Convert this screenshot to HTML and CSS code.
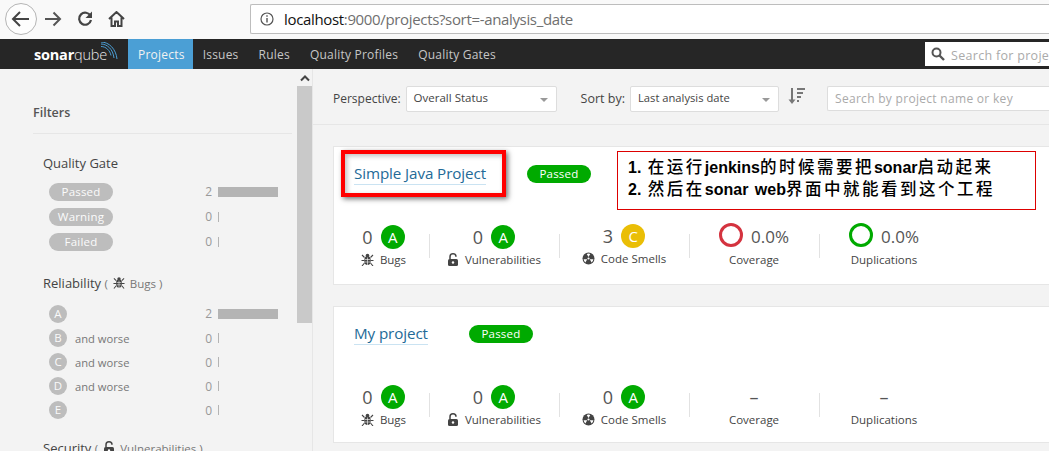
FILE: index.html
```html
<!DOCTYPE html>
<html lang="en">
<head>
<meta charset="utf-8">
<title>SonarQube projects</title>
<link rel="stylesheet" href="styles.css">
</head>
<body>
<header class="chrome">
  <div class="nav-btns">
    <span class="back"><svg width="24" height="24" viewBox="0 0 24 24"><path d="M20 12H5M11 5l-7 7 7 7" fill="none" stroke="#444" stroke-width="2"/></svg></span>
    <svg class="fwd" width="18" height="18" viewBox="0 0 18 18"><path d="M1 9h15M9.500 2.500L16 9l-6.500 6.500" fill="none" stroke="#555" stroke-width="2"/></svg>
    <svg class="rel" width="16" height="16" viewBox="0 0 16 16"><path d="M13.500 5A6 6 0 1 0 14 9" fill="none" stroke="#444" stroke-width="2.200"/><path d="M15 0.500v6.500h-6.500z" fill="#444"/></svg>
    <svg class="home" width="17" height="16" viewBox="0 0 17 16"><path d="M1 8l7.500-7 7.500 7M3.500 6.500V15h3.500v-4.500h3V15h3.500V6.500" fill="none" stroke="#444" stroke-width="2"/></svg>
  </div>
  <div class="address">
    <svg width="14" height="14" viewBox="0 0 14 14"><circle cx="7" cy="7" r="6" fill="none" stroke="#555" stroke-width="1.200"/><path d="M7 6v4.500M7 3.300v1.500" stroke="#555" stroke-width="1.400"/></svg>
    <span class="url"><b>localhost</b>:9000/projects?sort=-analysis_date</span>
  </div>
</header>
<nav class="topnav">
  <a class="logo"><b>sonar</b>qube<svg class="waves" width="18" height="18" viewBox="0 0 18 18"><path d="M1 2c6 0 12 5 13 14M1 0c8 0 15 7 16 17M1 4.500c5 0 9 4 10 9" fill="none" stroke="#4b9fd5" stroke-width="1"/></svg></a>
  <a class="tab active">Projects</a>
  <a class="tab">Issues</a>
  <a class="tab">Rules</a>
  <a class="tab">Quality Profiles</a>
  <a class="tab">Quality Gates</a>
  <div class="global-search">
    <svg width="14" height="14" viewBox="0 0 14 14"><circle cx="5.500" cy="5.500" r="4" fill="none" stroke="#555" stroke-width="2"/><path d="M8.500 8.500l4.500 4.500" stroke="#555" stroke-width="2.400"/></svg>
    <span>Search for proje</span>
  </div>
</nav>
<div class="page">
  <aside class="sidebar">
    <h2 class="filters">Filters</h2>
    <section class="facet gate-facet">
      <h3>Quality Gate</h3>
      <div class="row"><span class="pill">Passed</span><span class="count">2</span><i class="bar full"></i></div>
      <div class="row"><span class="pill">Warning</span><span class="count">0</span><i class="bar"></i></div>
      <div class="row"><span class="pill">Failed</span><span class="count">0</span><i class="bar"></i></div>
    </section>
    <section class="facet rel-facet">
      <h3>Reliability <small>( <svg class="bug" width="12" height="13" viewBox="0 0 13 13"><use href="#bug"/></svg> Bugs )</small></h3>
      <div class="row tall"><span class="grade">A</span><span class="worse"></span><span class="count">2</span><i class="bar full"></i></div>
      <div class="row tall"><span class="grade">B</span><span class="worse">and worse</span><span class="count">0</span><i class="bar"></i></div>
      <div class="row tall"><span class="grade">C</span><span class="worse">and worse</span><span class="count">0</span><i class="bar"></i></div>
      <div class="row tall"><span class="grade">D</span><span class="worse">and worse</span><span class="count">0</span><i class="bar"></i></div>
      <div class="row tall"><span class="grade">E</span><span class="worse"></span><span class="count">0</span><i class="bar"></i></div>
    </section>
    <section class="facet sec-facet">
      <h3>Security <small>( <svg class="bug" width="12" height="13" viewBox="0 0 12 13"><use href="#lock"/></svg> Vulnerabilities )</small></h3>
    </section>
  </aside>
  <div class="scrollbar"><svg width="10" height="6" viewBox="0 0 10 6"><path d="M1 5l4-4 4 4" fill="none" stroke="#444" stroke-width="2"/></svg><div class="thumb"></div></div>
  <main class="main">
    <div class="toolbar">
      <label class="lab">Perspective:</label>
      <div class="select persp">Overall Status<i class="caret"></i></div>
      <label class="lab sort">Sort by:</label>
      <div class="select order">Last analysis date<i class="caret"></i></div>
      <svg class="sorticon" width="17" height="17" viewBox="0 0 17 17"><path d="M4 0v13" stroke="#777" stroke-width="2"/><path d="M0.500 11.500h7L4 16z" fill="#777"/><path d="M9 1h8M9 5h6M9 9h4M9 13h2" stroke="#777" stroke-width="2"/></svg>
      <div class="search">Search by project name or key</div>
    </div>
    <article class="card first">
      <div class="title"><a class="name">Simple Java Project</a><span class="status">Passed</span></div>
      <div class="measures">
        <div class="m"><div class="v"><span class="n">0</span><span class="g a">A</span></div><div class="l"><svg width="13" height="13" viewBox="0 0 13 13"><use href="#bug"/></svg>Bugs</div></div>
        <div class="m"><div class="v"><span class="n">0</span><span class="g a">A</span></div><div class="l"><svg width="12" height="13" viewBox="0 0 12 13"><use href="#lock"/></svg>Vulnerabilities</div></div>
        <div class="m up"><div class="v"><span class="n">3</span><span class="g c">C</span></div><div class="l"><svg width="13" height="13" viewBox="0 0 13 13"><use href="#nuke"/></svg>Code Smells</div></div>
        <div class="m"><div class="v"><span class="ring red"></span><span class="n pct">0.0%</span></div><div class="l">Coverage</div></div>
        <div class="m"><div class="v"><span class="ring green"></span><span class="n pct">0.0%</span></div><div class="l">Duplications</div></div>
      </div>
    </article>
    <article class="card second">
      <div class="title"><a class="name">My project</a><span class="status">Passed</span></div>
      <div class="measures">
        <div class="m"><div class="v"><span class="n">0</span><span class="g a">A</span></div><div class="l"><svg width="13" height="13" viewBox="0 0 13 13"><use href="#bug"/></svg>Bugs</div></div>
        <div class="m"><div class="v"><span class="n">0</span><span class="g a">A</span></div><div class="l"><svg width="12" height="13" viewBox="0 0 12 13"><use href="#lock"/></svg>Vulnerabilities</div></div>
        <div class="m"><div class="v"><span class="n">0</span><span class="g a">A</span></div><div class="l"><svg width="13" height="13" viewBox="0 0 13 13"><use href="#nuke"/></svg>Code Smells</div></div>
        <div class="m"><div class="v"><span class="n">–</span></div><div class="l">Coverage</div></div>
        <div class="m"><div class="v"><span class="n">–</span></div><div class="l">Duplications</div></div>
      </div>
    </article>
  </main>
</div>
<div class="redbox"></div>
<div class="note">1. <span class="zh">在运行</span>jenkins<span class="zh">的时候需要把</span>sonar<span class="zh">启动起来</span><br>2. <span class="zh">然后在</span>sonar web<span class="zh">界面中就能看到这个工程</span></div>
<svg class="defs" width="0" height="0">
  <defs>
    <g id="bug" fill="#444"><ellipse cx="6.500" cy="7.500" rx="3.200" ry="4.500"/><circle cx="6.500" cy="2.500" r="1.800"/><path d="M1 2l2.500 2.500M12 2L9.500 4.500M0.500 7.500h3M12.500 7.500h-3M1 13l2.500-3M12 13l-2.500-3" stroke="#444" stroke-width="1.100"/><path d="M6.500 4.500v7.500M4 6.500h5M4 9h5" stroke="#fff" stroke-width="0.600"/></g>
    <g id="lock"><path d="M3 6V3.800a3 3 0 0 1 6 0" fill="none" stroke="#444" stroke-width="1.500"/><rect x="1" y="6" width="10" height="7" rx="1.500" fill="#444"/><circle cx="6" cy="9.500" r="1.200" fill="#fff"/></g>
    <g id="nuke"><circle cx="6.500" cy="6.500" r="6" fill="#444"/><circle cx="6.500" cy="6.500" r="1.100" fill="#fff"/><path d="M6.500 5L4.700 1.900A5 5 0 0 1 8.300 1.900zM5.200 7.300L1.600 7.300A5 5 0 0 0 3.400 10.400zM7.800 7.300L11.400 7.300A5 5 0 0 1 9.600 10.400z" fill="#fff"/></g>
  </defs>
</svg>
</body>
</html>
```
FILE: styles.css
```css
* { box-sizing: border-box; }
html, body { margin: 0; height: 451px; overflow: hidden; }
body { position: relative; font-family: "Open Sans", "Noto Sans CJK SC", sans-serif; font-size: 12px; color: #444; background: #fff; }
.defs { position: absolute; }

.chrome { height: 39px; background: #f9f9f9; display: flex; align-items: flex-start; }
.nav-btns { width: 250px; height: 39px; padding: 1px 0 0 5px; display: flex; align-items: center; flex: none; }
.back { width: 32px; height: 32px; border: 1px solid #b5b5b5; border-radius: 50%; background: #fdfdfd; display: flex; align-items: center; justify-content: center; flex: none; margin-top: -3px; }
.fwd { margin-left: 7px; margin-top: -3px; }
.rel { margin-left: 15px; margin-top: -3px; }
.home { margin-left: 15px; margin-top: -3px; }
.address { margin-top: 4px; flex: 1; height: 30px; background: #fff; border: 1px solid #bdbdbd; border-right: 0; border-radius: 2px 0 0 2px; display: flex; align-items: center; padding-left: 9px; gap: 10px; }
.url { font-size: 15px; color: #6f6f6f; letter-spacing: -0.34px; }
.url b { font-weight: 400; color: #111; }

.topnav { height: 30px; background: #262626; display: flex; align-items: stretch; position: relative; }
.logo { width: 128px; flex: none; color: #e8e8e8; font-size: 14.500px; line-height: 32px; padding-left: 34px; position: relative; letter-spacing: -0.2px; font-weight: 300; }
.logo b { color: #fff; font-weight: 700; }
.waves { position: absolute; left: 100px; top: 3px; }
.tab { color: #c6c6c6; font-size: 12px; line-height: 32px; padding: 0 10px; letter-spacing: 0.22px; }
.tab.active { background: #4b9fd5; color: #f2f2f2; padding-right: 8px; }
.global-search { position: absolute; left: 925px; top: 3px; width: 124px; height: 24px; background: #fff; display: flex; align-items: center; gap: 6px; padding-left: 6px; color: #aaa; white-space: nowrap; font-size: 12.500px; letter-spacing: 0.3px; }
.global-search svg { flex: none; }
.global-search span { padding-top: 2px; }

.page { display: flex; height: 382px; background: #f3f3f3; }
.sidebar { width: 297px; flex: none; padding: 0 0 0 33px; overflow: hidden; }
.filters { margin: 0; height: 65px; width: 259px; border-bottom: 1px solid #e6e6e6; font-size: 12.500px; font-weight: 600; line-height: 87px; color: #555; }
.facet { width: 235px; margin-left: 10px; }
.facet h3 { margin: 0; font-size: 13px; font-weight: 400; color: #444; line-height: 17px; }
.facet h3 small { font-size: 11.500px; color: #777; }
.facet h3 svg { vertical-align: -1px; margin: 0 2px; }
.gate-facet { padding-top: 21px; }
.row { height: 25px; display: flex; align-items: center; margin-left: 6px; }
.gate-facet .row:first-of-type { margin-top: 7px; }
.pill { width: 64px; height: 18px; background: #bdbdbd; color: #fbfbfb; border-radius: 9px; text-align: center; line-height: 18px; font-size: 11.500px; letter-spacing: 0.2px; flex: none; }
.count { margin-left: auto; width: 8px; color: #999; font-size: 12px; text-align: right; flex: none; }
.bar { width: 60px; margin-left: 6px; height: 10px; flex: none; position: relative; }
.bar::before { content: ""; position: absolute; left: 0; top: 0; width: 1px; height: 10px; background: #b4b4b4; }
.bar.full::before { width: 60px; }
.rel-facet { padding-top: 21px; }
.rel-facet .row { height: 24px; }
.rel-facet .row:first-of-type { margin-top: 9px; height: 25px; }
.grade { width: 18px; height: 18px; border-radius: 50%; background: #bdbdbd; color: #fafafa; text-align: center; line-height: 18px; font-size: 11.500px; flex: none; }
.worse { margin-left: 8px; color: #777; font-size: 11.200px; }
.sec-facet { padding-top: 18px; }

.scrollbar { width: 15px; background: #f3f3f3; flex: none; display: flex; flex-direction: column; align-items: center; }
.scrollbar svg { margin-top: 6px; height: 7px; flex: none; }
.thumb { width: 15px; height: 237px; background: #c9c9c9; margin-top: 4px; flex: none; }

.main { flex: 1; border-left: 1px solid #e6e6e6; min-width: 0; padding-left: 20px; }
.toolbar { margin-left: -20px; height: 56px; border-bottom: 1px solid #e6e6e6; display: flex; align-items: center; padding: 4px 0 0 20px; }
.lab { font-size: 12px; color: #444; }
.sort { margin-left: 24px; font-size: 12.500px; }
.select { height: 26px; margin-left: 4px; background: #fff; border: 1px solid #ddd; border-radius: 2px; padding-left: 7px; line-height: 22px; font-size: 11.500px; color: #444; position: relative; flex: none; }
.persp { margin-left: 5px; width: 151px; }
.order { margin-left: 5px; width: 149px; font-size: 11.200px; }
.caret { position: absolute; right: 8px; top: 11px; border: 4px solid transparent; border-top: 4px solid #999; border-bottom: 0; }
.sorticon { margin-left: 9px; flex: none; margin-top: -5px; }
.search { margin-left: 22px; flex: 1; height: 25px; background: #fff; border: 1px solid #ddd; border-right: 0; border-radius: 2px 0 0 2px; color: #aaa; line-height: 23px; padding-left: 7px; font-size: 12px; letter-spacing: 0.3px; }

.card { background: #fff; border: 1px solid #e6e6e6; border-right: 0; position: relative; }
.first { height: 139px; margin-top: 21px; }
.second { height: 137px; margin-top: 21px; }
.title { height: 58px; padding: 16px 0 0 20px; display: flex; align-items: flex-start; }
.name { color: #236a97; font-size: 15.200px; line-height: 20px; height: 22px; border-bottom: 1px solid #cae3f2; letter-spacing: -0.1px; }
.status { background: #00aa00; color: #fff; border-radius: 9px; width: 64px; height: 18px; line-height: 18px; text-align: center; font-size: 11.500px; margin: 2px 0 0 41px; letter-spacing: 0.2px; }
.measures { display: flex; padding-top: 21px; }
.second .measures { padding-top: 20px; }
.m { width: 130px; height: 46px; margin-top: 8px; text-align: center; position: relative; flex: none; }
.m:first-child { width: 95px; padding-left: 4px; }
.m + .m::before { content: ""; position: absolute; left: 0; top: 0; width: 1px; height: 24px; background: #e2e2e2; }
.v { height: 24px; margin-top: -8px; display: flex; align-items: center; justify-content: center; gap: 8px; }
.first .v { margin-top: -9px; }
.first .up .v { margin-top: -10px; }
.first .up .l { margin-top: 3px; }
.n { font-size: 18px; font-weight: 400; color: #555; }
.pct { font-size: 17px; margin-top: -2px; }
.g { width: 24px; height: 24px; border-radius: 50%; color: #fff; font-size: 15px; line-height: 24px; flex: none; }
.a { background: #00aa00; }
.c { background: #eabe06; }
.ring { width: 24px; height: 24px; border-radius: 50%; border: 3px solid; flex: none; margin-top: -4px; }
.red { border-color: #d4333f; }
.green { border-color: #00aa00; }
.l { margin-top: 3px; font-size: 11.500px; color: #444; display: flex; align-items: center; justify-content: center; gap: 6px; }

.redbox { position: absolute; left: 341px; top: 150px; width: 165px; height: 47px; border: 4px solid #f00; box-shadow: 2px 2px 5px rgba(0,0,0,.55), inset 2px 2px 5px rgba(0,0,0,.25); }
.note { position: absolute; left: 617px; top: 151px; width: 419px; height: 59px; background: #fff; border: 1px solid #d00; padding: 5px 0 0 10px; font-family: "Liberation Sans", "Noto Sans CJK SC", sans-serif; font-size: 16px; line-height: 20.500px; color: #000; white-space: nowrap; font-weight: 700; word-spacing: 2px; }
.zh { font-size: 16.500px; letter-spacing: 2.500px; font-weight: 500; }
```
